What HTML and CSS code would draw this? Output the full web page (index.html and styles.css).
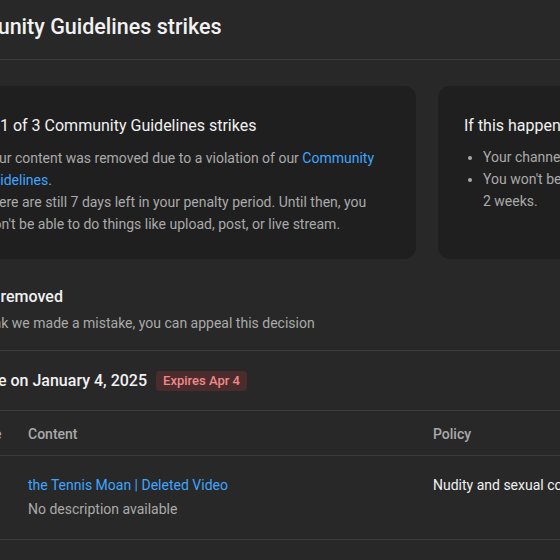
FILE: index.html
```html
<!DOCTYPE html>
<html lang="en">
<head>
<meta charset="utf-8">
<title>Community Guidelines strikes</title>
<link rel="stylesheet" href="styles.css">
</head>
<body>
<div class="page">
  <header class="page-header">
    <h1 class="page-title">Community Guidelines strikes</h1>
  </header>

  <section class="cards">
    <div class="card card-main">
      <h2 class="card-title">
        <svg class="card-icon" viewBox="0 0 16 16" width="16" height="16" aria-hidden="true"><circle cx="8" cy="8" r="7" fill="none" stroke="#aaa" stroke-width="1.5"/></svg>
        <span>1 of 3 Community Guidelines strikes</span>
      </h2>
      <p class="card-text">Your content was removed due to a violation of our <a class="link" href="#">Community Guidelines</a>.</p>
      <p class="card-text">There are still 7 days left in your penalty period. Until then, you won't be able to do things like upload, post, or live stream.</p>
    </div>
    <div class="card card-side">
      <h2 class="card-title"><span>If this happens again</span></h2>
      <ul class="bullets">
        <li>Your channel will get a second strike</li>
        <li>You won't be able to upload, post, or live stream for 2&nbsp;weeks.</li>
      </ul>
    </div>
  </section>

  <section class="removed">
    <h3 class="section-title">Content removed</h3>
    <p class="section-text">If you think we made a mistake, you can appeal this decision</p>
  </section>

  <section class="strike">
    <div class="strike-row">
      <svg class="chev" viewBox="0 0 24 24" width="24" height="24" aria-hidden="true"><path d="M7 10l5 5 5-5" fill="none" stroke="#f1f1f1" stroke-width="2"/></svg>
      <h3 class="section-title">Strike on January 4, 2025</h3>
      <span class="badge">Expires Apr 4</span>
    </div>
  </section>

  <div class="table">
    <div class="thead">
      <div class="th th-date">Date</div>
      <div class="th">Content</div>
      <div class="th">Policy</div>
    </div>
    <div class="trow">
      <div class="td td-date">Jan 4, 2025</div>
      <div class="td">
        <a class="link" href="#">the Tennis Moan | Deleted Video</a>
        <div class="muted">No description available</div>
      </div>
      <div class="td policy">Nudity and sexual content</div>
    </div>
  </div>
</div>
</body>
</html>
```
FILE: styles.css
```css
html, body {
  margin: 0;
  padding: 0;
  background: #282828;
  overflow: hidden;
}
body {
  font-family: Roboto, "Liberation Sans", sans-serif;
  color: #f1f1f1;
  width: 560px;
  height: 560px;
}
.page {
  margin-left: -60px;
  width: 1000px;
}
.page-header {
  padding: 13px 0 18px;
  border-bottom: 1px solid #3d3d3d;
}
.page-title {
  margin: 0 0 0 -6px;
  font-size: 21.5px;
  line-height: 28px;
  font-weight: 500;
}
.cards {
  display: flex;
  gap: 22px;
  margin-top: 26px;
}
.card {
  background: #1f1f1f;
  border-radius: 12px;
  padding: 28px 24px 24px;
  box-sizing: border-box;
}
.card-main {
  width: 476px;
  padding-left: 43px;
}
.card-side {
  flex: 1;
  padding-left: 26px;
}
.card-title {
  margin: 0;
  font-size: 16px;
  line-height: 24px;
  font-weight: 400;
  display: flex;
  align-items: center;
  gap: 1px;
}
.card-icon { flex: none; }
.card-text {
  margin: 9px 0 0;
  font-size: 14px;
  line-height: 22px;
  color: #aaaaaa;
}
.card-text + .card-text { margin-top: 0; }
.link {
  color: #3ea6ff;
  text-decoration: none;
}
.bullets {
  margin: 8px 0 0;
  padding-left: 19px;
  font-size: 14px;
  line-height: 22px;
  color: #aaaaaa;
  width: 350px;
}
.removed {
  padding: 26px 0 16px;
  border-bottom: 1px solid #3d3d3d;
}
.section-title {
  margin: 0;
  font-size: 16px;
  line-height: 24px;
  font-weight: 500;
}
.section-text {
  margin: 3px 0 0;
  font-size: 14px;
  line-height: 22px;
  color: #aaaaaa;
}
.strike {
  padding: 18px 0 17px;
  border-bottom: 1px solid #3d3d3d;
}
.strike-row {
  display: flex;
  align-items: center;
}
.chev { flex: none; margin-right: 1px; }
.badge {
  margin-left: 9px;
  background: #4a2c2d;
  color: #ee8a8a;
  font-size: 13px;
  font-weight: 500;
  line-height: 20px;
  padding: 0 7px;
  border-radius: 4px;
}
.thead, .trow {
  display: grid;
  grid-template-columns: 88px 405px 1fr;
  border-bottom: 1px solid #3d3d3d;
}
.th {
  padding: 13px 0 11px;
  font-size: 14px;
  line-height: 20px;
  font-weight: 500;
  color: #aaaaaa;
}
.th-date {
  text-align: right;
  padding-right: 26.5px;
}
.td {
  padding: 19px 0 20px;
  font-size: 14px;
  line-height: 20px;
}
.td-date { visibility: hidden; }
.muted {
  margin-top: 4px;
  color: #aaaaaa;
}
.policy { color: #f1f1f1; }
```
